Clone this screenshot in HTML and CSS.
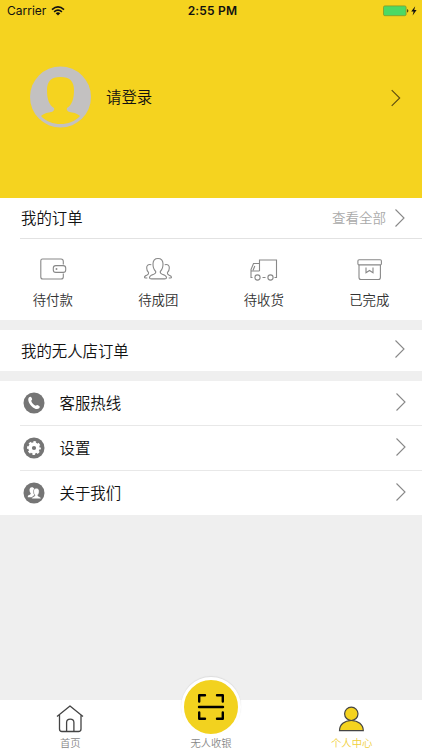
FILE: index.html
```
<!DOCTYPE html>
<html lang="zh-CN">
<head>
    <meta charset="UTF-8">
    <meta name="viewport" content="width=device-width, initial-scale=1.0">
    <title>个人中心</title>
    <link rel="stylesheet" href="styles.css">
</head>
<body>
    <header class="profile">
        <div class="status-bar">
            <div class="carrier">
                <span>Carrier</span>
                <svg class="wifi" width="14" height="10" viewBox="0 0 14 10">
                    <g fill="none" stroke="#111" stroke-width="1.6">
                        <path d="M1 3.6Q7 -1.8 13 3.6"/>
                        <path d="M3.1 5.9Q7 2.5 10.9 5.9"/>
                    </g>
                    <path d="M4.7 7.2Q7 5.4 9.3 7.2L7 9.6z" fill="#111"/>
                </svg>
            </div>
            <span class="time">2:55 PM</span>
            <div class="battery">
                <svg width="35" height="12" viewBox="0 0 35 12">
                    <rect x="0.5" y="0.9" width="22.6" height="9.8" rx="1.4" fill="#4cd964" stroke="#7f9a2c" stroke-width="0.8"/>
                    <path d="M24 4v3.6q1.4-.4 1.4-1.8T24 4z" fill="#544a12"/>
                    <path d="M32.2 1.2L28.2 6.4h2.4l-1 4.2 4-5.5h-2.4z" fill="#111"/>
                </svg>
            </div>
        </div>
        <a class="login">
            <svg class="avatar" width="62" height="62" viewBox="0 0 62 62">
                <circle cx="31.5" cy="31" r="30.5" fill="#c3c1c1"/>
                <path d="M31.5 11C22 11 18 15.500 18 24C18 33 20 39 25 42C26 45 23 46 20 46.500C16 47 13.500 48.500 12 50C17 55.500 24 58 31.500 58S46 55.500 51 50C49.500 48.500 47 47 43 46.500C40 46 37 45 38 42C43 39 45 33 45 24C45 15.500 41 11 31.500 11z" fill="#f5d31f"/>
            </svg>
            <span class="login-text">请登录</span>
            <svg class="arrow arrow-dark" width="10" height="18" viewBox="0 0 10 18"><path d="M.7 1.2L8.7 9 .7 16.8"/></svg>
        </a>
    </header>

    <section class="orders">
        <div class="orders-head">
            <span>我的订单</span>
            <a class="view-all">查看全部
                <svg class="arrow" width="10" height="18" viewBox="0 0 10 18"><path d="M.5 .5L9 9 .5 17.5"/></svg>
            </a>
        </div>
        <div class="orders-grid">
            <a class="order-item">
                <svg width="30" height="26" viewBox="0 0 30 26">
                    <path d="M25.3 8.5V5.5Q25.3 3 23 3H4.5Q2.8 3 2.8 4.8V21Q2.8 23 4.8 23H23Q25.3 23 25.3 21V17.5"/>
                    <rect x="15.3" y="9.6" width="12.4" height="6.8" rx="2.5"/>
                    <circle cx="18.5" cy="13" r=".4"/>
                </svg>
                <span>待付款</span>
            </a>
            <a class="order-item">
                <svg width="30" height="26" viewBox="0 0 30 26">
                    <path d="M12.7 15.5C10.7 13.5 9.9 11 10 7.8C10.1 4.5 11.9 2.5 15 2.5S19.9 4.5 20 7.8C20.1 11 19.3 13.5 17.3 15.5C16.9 17 17.6 17.6 19.3 18.2C21.8 19 23.5 19.9 23.5 21.7C23.5 22.7 22.7 22.9 21.5 22.9H8.5C7.3 22.9 6.5 22.7 6.5 21.7C6.5 19.9 8.2 19 10.7 18.2C12.4 17.6 13.1 17 12.7 15.5z"/>
                    <path d="M8.3 8.8C5.2 7.7 3.5 9.7 3.7 12C3.7 14.2 4.5 15.6 5.6 16.7C5.8 17.9 5.3 18.4 4.2 18.9C2.5 19.5 1.4 20.2 1.5 21.3C1.5 21.8 2 22 2.7 22H4.3"/>
                    <path d="M21.7 8.8C24.8 7.7 26.5 9.7 26.3 12C26.3 14.2 25.5 15.6 24.4 16.7C24.2 17.9 24.7 18.4 25.8 18.9C27.5 19.5 28.6 20.2 28.5 21.3C28.5 21.8 28 22 27.3 22H25.7"/>
                </svg>
                <span>待成团</span>
            </a>
            <a class="order-item">
                <svg width="30" height="26" viewBox="0 0 30 26">
                    <path d="M3.500 21.5H2V13.5L4.500 7.500H10.500M10.500 15V4H27.500V21.500H25.500M2 15H10.500M13.500 21.500H16.500"/>
                    <path d="M4 14.500L5.800 10"/>
                    <circle cx="8.500" cy="21.500" r="2.600"/>
                    <circle cx="21.500" cy="21.500" r="2.600"/>
                </svg>
                <span>待收货</span>
            </a>
            <a class="order-item">
                <svg width="30" height="26" viewBox="0 0 30 26">
                    <rect x="3.9" y="3.7" width="23.5" height="5.2" rx="1.2"/>
                    <path d="M5 8.900V21.500Q5 23.500 7 23.500H24.400Q26.400 23.500 26.400 21.500V8.900M12 11.500V16.800L15.500 14.500 19 16.800V11.500"/>
                </svg>
                <span>已完成</span>
            </a>
        </div>
    </section>

    <a class="store-orders">
        <span>我的无人店订单</span>
        <svg class="arrow" width="10" height="18" viewBox="0 0 10 18"><path d="M.5 .5L9 9 .5 17.5"/></svg>
    </a>

    <nav class="menu">
        <a class="menu-item">
            <svg class="menu-icon" width="22" height="22" viewBox="0 0 22 22">
                <circle cx="11" cy="11" r="10.5" fill="#757575"/>
                <path d="M6.1 5.2C7.4 4.2 8 4.6 8.6 5.8c.8 1.5.7 2-.4 3 .6 2.3 2.4 4.2 4.6 5 1.1-1 1.6-1 3-.1 1.2.8 1.3 1.4.3 2.5-1.6 1.6-4.8.8-7.5-2C5.6 11.3 4.3 7 6.1 5.2z" fill="#fff"/>
            </svg>
            <span>客服热线</span>
            <svg class="arrow" width="10" height="18" viewBox="0 0 10 18"><path d="M.5 .5L9 9 .5 17.5"/></svg>
        </a>
        <a class="menu-item">
            <svg class="menu-icon" width="22" height="22" viewBox="0 0 22 22">
                <circle cx="11" cy="11" r="10.5" fill="#757575"/>
                <circle cx="11" cy="11" r="3.9" fill="none" stroke="#fff" stroke-width="3.6"/>
                <circle cx="11" cy="11" r="5.7" fill="none" stroke="#fff" stroke-width="2.4" stroke-dasharray="2.5 1.977" stroke-dashoffset="1.25"/>
            </svg>
            <span>设置</span>
            <svg class="arrow" width="10" height="18" viewBox="0 0 10 18"><path d="M.5 .5L9 9 .5 17.5"/></svg>
        </a>
        <a class="menu-item">
            <svg class="menu-icon" width="22" height="22" viewBox="0 0 22 22">
                <circle cx="11" cy="11" r="10.5" fill="#757575"/>
                <path d="M9 5.2C6.8 5.2 6.3 7 6.6 9c.1 1 .6 1.7 1.1 2.300.1 1-.5 1.300-1.500 1.700-1.100.4-1.500 1-1.400 2.200h4.400c.4-1.100 1.300-1.500 2.300-2-1.200-2-1.600-4.200-.4-6.500C10.700 5.700 10 5.200 9 5.200z" fill="#fff"/>
                <path d="M13.3 6.3c-2.100 0-2.900 1.500-2.700 3.600.1 1.400.6 2.300 1.300 3.100 0 1-.5 1.400-1.500 1.700-1.200.5-1.600 1-1.500 2h8.900c.1-1-.4-1.500-1.500-2-1-.4-1.500-.7-1.500-1.700.7-.8 1.200-1.700 1.300-3.100.2-2.100-.7-3.600-2.800-3.600z" fill="#fff" stroke="#757575" stroke-width=".4"/>
            </svg>
            <span>关于我们</span>
            <svg class="arrow" width="10" height="18" viewBox="0 0 10 18"><path d="M.5 .5L9 9 .5 17.5"/></svg>
        </a>
    </nav>

    <footer class="tab-bar">
        <a class="tab">
            <svg width="30" height="30" viewBox="0 0 30 30" fill="none" stroke="#444" stroke-width="1.3" stroke-linejoin="round">
                <path d="M2 12.5L15 2 28 12.5M4.5 10.8V25Q4.5 27.5 7 27.5H23.5Q26 27.5 26 25V10.8"/>
                <path d="M11.6 27.5V18.5C11.6 13.9 18.9 13.9 18.9 18.5V27.5"/>
            </svg>
            <span>首页</span>
        </a>
        <a class="tab tab-scan">
            <div class="scan-button">
                <svg width="28" height="28" viewBox="0 0 28 28" fill="none" stroke="#000" stroke-width="2.4" stroke-linejoin="round" stroke-linecap="round">
                    <path d="M2.2 8.5V2.2H8M20 2.2H25.8V8.5M2.2 19.5V25.8H8M20 25.8H25.8V19.5M2 14H26"/>
                </svg>
            </div>
            <span>无人收银</span>
        </a>
        <a class="tab active">
            <svg width="30" height="30" viewBox="0 0 30 30" fill="#f5d31f" stroke="#444" stroke-width="1.2">
                <path d="M2.5 26.7C2.500 20.500 7.500 16.500 14.300 16.500S26.300 20.500 26.300 26.700z"/>
                <circle cx="14.300" cy="9.800" r="6.700"/>
            </svg>
            <span>个人中心</span>
        </a>
    </footer>
</body>
</html>
```

FILE: styles.css
```
* {
    box-sizing: border-box;
}
body {
    margin: 0;
    height: 750px;
    display: flex;
    flex-direction: column;
    overflow: hidden;
    background-color: #efefef;
    color: #111;
    font-family: "Noto Sans CJK SC", sans-serif;
    font-size: 15.4px;
    font-weight: 350;
    line-height: 1;
}
svg {
    display: block;
    flex: none;
}
.profile {
    height: 198px;
    background-color: #f5d31f;
}
.status-bar {
    display: grid;
    grid-template-columns: 1fr auto 1fr;
    align-items: center;
    height: 22px;
    padding: 0 4px 0 7px;
    font-family: Inter, sans-serif;
    font-size: 12px;
    font-weight: 400;
}
.carrier {
    display: flex;
    align-items: center;
    gap: 5px;
}
.time {
    font-weight: 600;
    letter-spacing: 0.2px;
}
.battery {
    justify-self: end;
}
.login {
    display: flex;
    align-items: center;
    height: 62px;
    margin-top: 44px;
    padding: 0 21px 0 29px;
}
.login-text {
    margin-left: 15px;
}
.arrow {
    margin-left: auto;
    fill: none;
    stroke: #888;
    stroke-width: 1.1;
}
.arrow-dark {
    stroke: #5c4b10;
    margin-top: 2px;
}
.orders {
    height: 122px;
    background-color: white;
}
.orders-head {
    display: flex;
    align-items: center;
    justify-content: space-between;
    height: 41px;
    margin-left: 20px;
    padding: 0 17px 0 1px;
    border-bottom: 1px solid #e2e2e2;
}
.view-all {
    display: flex;
    align-items: center;
    gap: 9px;
    color: #aaa;
    font-size: 13.5px;
}
.orders-grid {
    display: grid;
    grid-template-columns: repeat(4, 1fr);
    padding-top: 17px;
}
.order-item {
    display: flex;
    flex-direction: column;
    align-items: center;
    gap: 11px;
    color: #333;
    font-size: 13.4px;
}
.order-item svg {
    fill: none;
    stroke: #888;
    stroke-width: 1.1;
}
.store-orders {
    display: flex;
    align-items: center;
    height: 41px;
    margin: 10px 0;
    padding: 0 17px 0 21px;
    background-color: white;
}
.store-orders .arrow {
    margin-top: -4px;
}
.menu {
    background-color: white;
    padding-left: 20px;
}
.menu-item {
    display: flex;
    align-items: center;
    height: 45px;
    padding: 0 16px 0 2.5px;
    border-bottom: 1px solid #e8e8e8;
}
.menu-item:last-child {
    height: 44px;
    border-bottom: none;
}
.menu-icon {
    margin-right: 15px;
}
.menu-item .arrow {
    margin-top: -3px;
}
.tab-bar {
    display: grid;
    grid-template-columns: repeat(3, 1fr);
    grid-template-rows: 50px;
    height: 50px;
    margin-top: auto;
    background-color: white;
}
.tab {
    display: flex;
    flex-direction: column;
    align-items: center;
    justify-content: flex-end;
    gap: 4px;
    padding-bottom: 2px;
    color: #888;
    font-size: 10.3px;
}
.tab.active {
    color: #f0cf3a;
}
.tab-scan {
    gap: 1px;
}
.scan-button {
    display: flex;
    align-items: center;
    justify-content: center;
    flex: none;
    width: 60px;
    height: 60px;
    border: 3px solid white;
    border-radius: 50%;
    background-color: #f2d21f;
    box-shadow: 0 -1px 1px #ddd;
}
```
